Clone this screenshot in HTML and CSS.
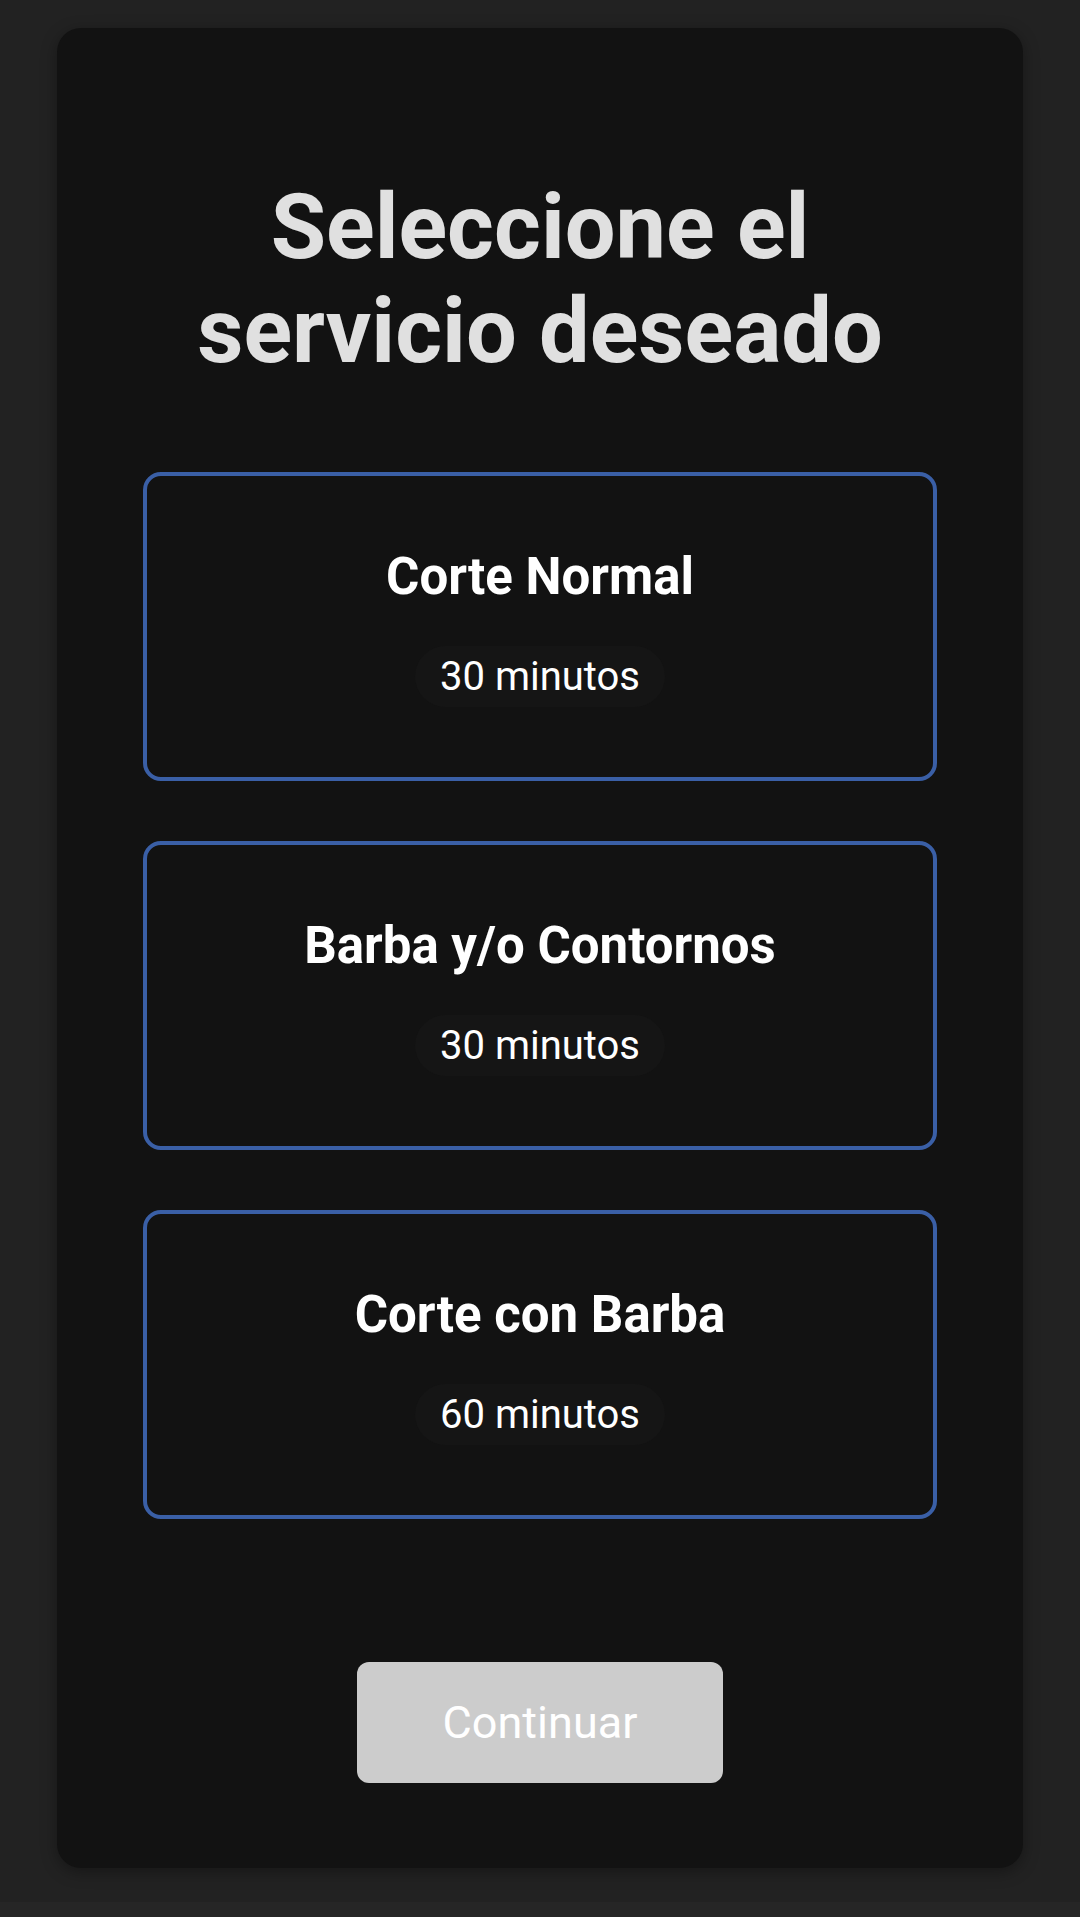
FILE: index.html
```html
<!DOCTYPE html>
<html lang="es">
<head>
<meta charset="utf-8">
<title>Seleccione el servicio</title>
<link rel="stylesheet" href="styles.css">
</head>
<body>
<main class="panel">
  <h1 class="title">Seleccione el servicio deseado</h1>
  <div class="services">
    <div class="service">
      <h2 class="service-name">Corte Normal</h2>
      <span class="duration">30 minutos</span>
    </div>
    <div class="service">
      <h2 class="service-name">Barba y/o Contornos</h2>
      <span class="duration">30 minutos</span>
    </div>
    <div class="service">
      <h2 class="service-name">Corte con Barba</h2>
      <span class="duration">60 minutos</span>
    </div>
  </div>
  <div class="actions">
    <button class="continue" type="button">Continuar</button>
  </div>
</main>
</body>
</html>
```
FILE: styles.css
```css
html {
  background: #262626;
}
body {
  margin: 0;
  height: 1902px;
  background: #222222;
  font-family: Roboto, "Noto Sans", Arial, sans-serif;
  padding: 28px 57px 0;
  box-sizing: border-box;
}
.panel {
  background: #121212;
  border-radius: 24px;
  box-shadow: 0 4px 16px rgba(0, 0, 0, 0.35);
  height: 1840px;
  box-sizing: border-box;
  padding: 148px 86px 0;
  display: flex;
  flex-direction: column;
}
.title {
  margin: 0 auto;
  max-width: 740px;
  text-align: center;
  color: #e0e0e0;
  font-size: 90px;
  line-height: 104px;
  font-weight: 700;
}
.services {
  margin-top: 88px;
  display: flex;
  flex-direction: column;
  gap: 60px;
}
.service {
  height: 309px;
  box-sizing: border-box;
  border: 4px solid #3a5fa6;
  border-radius: 18px;
  display: flex;
  flex-direction: column;
  align-items: center;
  padding-top: 71px;
}
.service-name {
  margin: 0;
  color: #ffffff;
  font-size: 51px;
  line-height: 60px;
  font-weight: 700;
}
.duration {
  margin-top: 39px;
  padding: 8px 25px;
  border-radius: 31px;
  background: #151515;
  color: #ffffff;
  font-size: 40px;
  line-height: 45px;
}
.actions {
  margin-top: 143px;
  display: flex;
  justify-content: center;
}
.continue {
  width: 366px;
  height: 121px;
  border: none;
  border-radius: 12px;
  background: #cccccc;
  color: #ffffff;
  font-family: Roboto, "Noto Sans", Arial, sans-serif;
  font-size: 45px;
}
```
